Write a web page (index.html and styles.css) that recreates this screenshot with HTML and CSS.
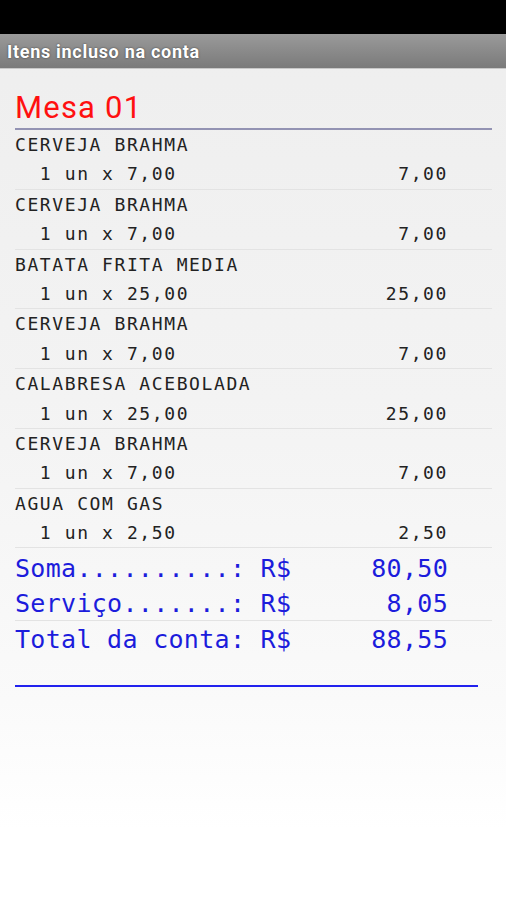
FILE: index.html
```html
<!DOCTYPE html>
<html lang="pt-BR">
<head>
    <meta charset="UTF-8">
    <meta name="viewport" content="width=device-width, initial-scale=1.0">
    <title>Itens incluso na conta</title>
    <link rel="stylesheet" href="styles.css">
</head>
<body>
    <div class="status-bar"></div>
    <div class="title-bar">Itens incluso na conta</div>

    <div class="content">
        <h1 class="mesa">Mesa 01</h1>

        <div class="items">
            <div class="item">
                <div class="item-name">CERVEJA BRAHMA</div>
                <div class="item-line"><span>  1 un x 7,00</span><span>7,00</span></div>
            </div>
            <div class="item">
                <div class="item-name">CERVEJA BRAHMA</div>
                <div class="item-line"><span>  1 un x 7,00</span><span>7,00</span></div>
            </div>
            <div class="item">
                <div class="item-name">BATATA FRITA MEDIA</div>
                <div class="item-line"><span>  1 un x 25,00</span><span>25,00</span></div>
            </div>
            <div class="item">
                <div class="item-name">CERVEJA BRAHMA</div>
                <div class="item-line"><span>  1 un x 7,00</span><span>7,00</span></div>
            </div>
            <div class="item">
                <div class="item-name">CALABRESA ACEBOLADA</div>
                <div class="item-line"><span>  1 un x 25,00</span><span>25,00</span></div>
            </div>
            <div class="item">
                <div class="item-name">CERVEJA BRAHMA</div>
                <div class="item-line"><span>  1 un x 7,00</span><span>7,00</span></div>
            </div>
            <div class="item">
                <div class="item-name">AGUA COM GAS</div>
                <div class="item-line"><span>  1 un x 2,50</span><span>2,50</span></div>
            </div>
        </div>

        <div class="totals">
            <div class="subtotals">
                <div class="total-line"><span>Soma..........: R$</span><span>80,50</span></div>
                <div class="total-line"><span>Serviço.......: R$</span><span>8,05</span></div>
            </div>
            <div class="total-line"><span>Total da conta: R$</span><span>88,55</span></div>
        </div>

        <div class="end-line"></div>
    </div>
</body>
</html>
```

FILE: styles.css
```css
html {
    background: #fff;
}
body {
    margin: 0;
    padding: 0;
    min-height: 900px;
    font-family: Roboto, "Liberation Sans", sans-serif;
    background: linear-gradient(to bottom, #eeeeee 0px, #f3f3f3 400px, #fafafa 700px, #ffffff 830px);
}
.status-bar {
    height: 34px;
    background-color: #000;
}
.title-bar {
    height: 34px;
    line-height: 36px;
    padding-left: 7px;
    font-size: 18px;
    font-weight: bold;
    letter-spacing: 0.7px;
    color: #fff;
    text-shadow: 0 0 2px rgba(0, 0, 0, 0.6);
    background: linear-gradient(to bottom, #9a9a9a, #7a7a7a);
    border-bottom: 1px solid #c8c8c8;
}
.content {
    margin: 0 14px 0 15px;
}
.mesa {
    margin: 0;
    box-sizing: border-box;
    height: 61px;
    line-height: 78px;
    font-size: 31px;
    font-weight: normal;
    letter-spacing: 1.2px;
    color: #ff1010;
    border-bottom: 2px solid #9393b3;
}
.item {
    border-bottom: 1px solid #e3e3e3;
}
.item-name,
.item-line {
    height: 29.4px;
    line-height: 30px;
    font-family: "DejaVu Sans Mono", "Liberation Mono", monospace;
    font-size: 18px;
    letter-spacing: 1.6px;
    color: #222;
    white-space: pre;
}
.item-line,
.total-line {
    display: flex;
    justify-content: space-between;
    padding-right: 44px;
}
.subtotals {
    border-bottom: 1px solid #e3e3e3;
    padding-top: 2px;
}
.total-line {
    height: 35px;
    line-height: 37px;
    font-family: "DejaVu Sans Mono", "Liberation Mono", monospace;
    font-size: 25px;
    letter-spacing: 0.3px;
    color: #1c1cdc;
    white-space: pre;
}
.end-line {
    margin-top: 29px;
    width: 463px;
    height: 2px;
    background-color: #2222ee;
}
```
